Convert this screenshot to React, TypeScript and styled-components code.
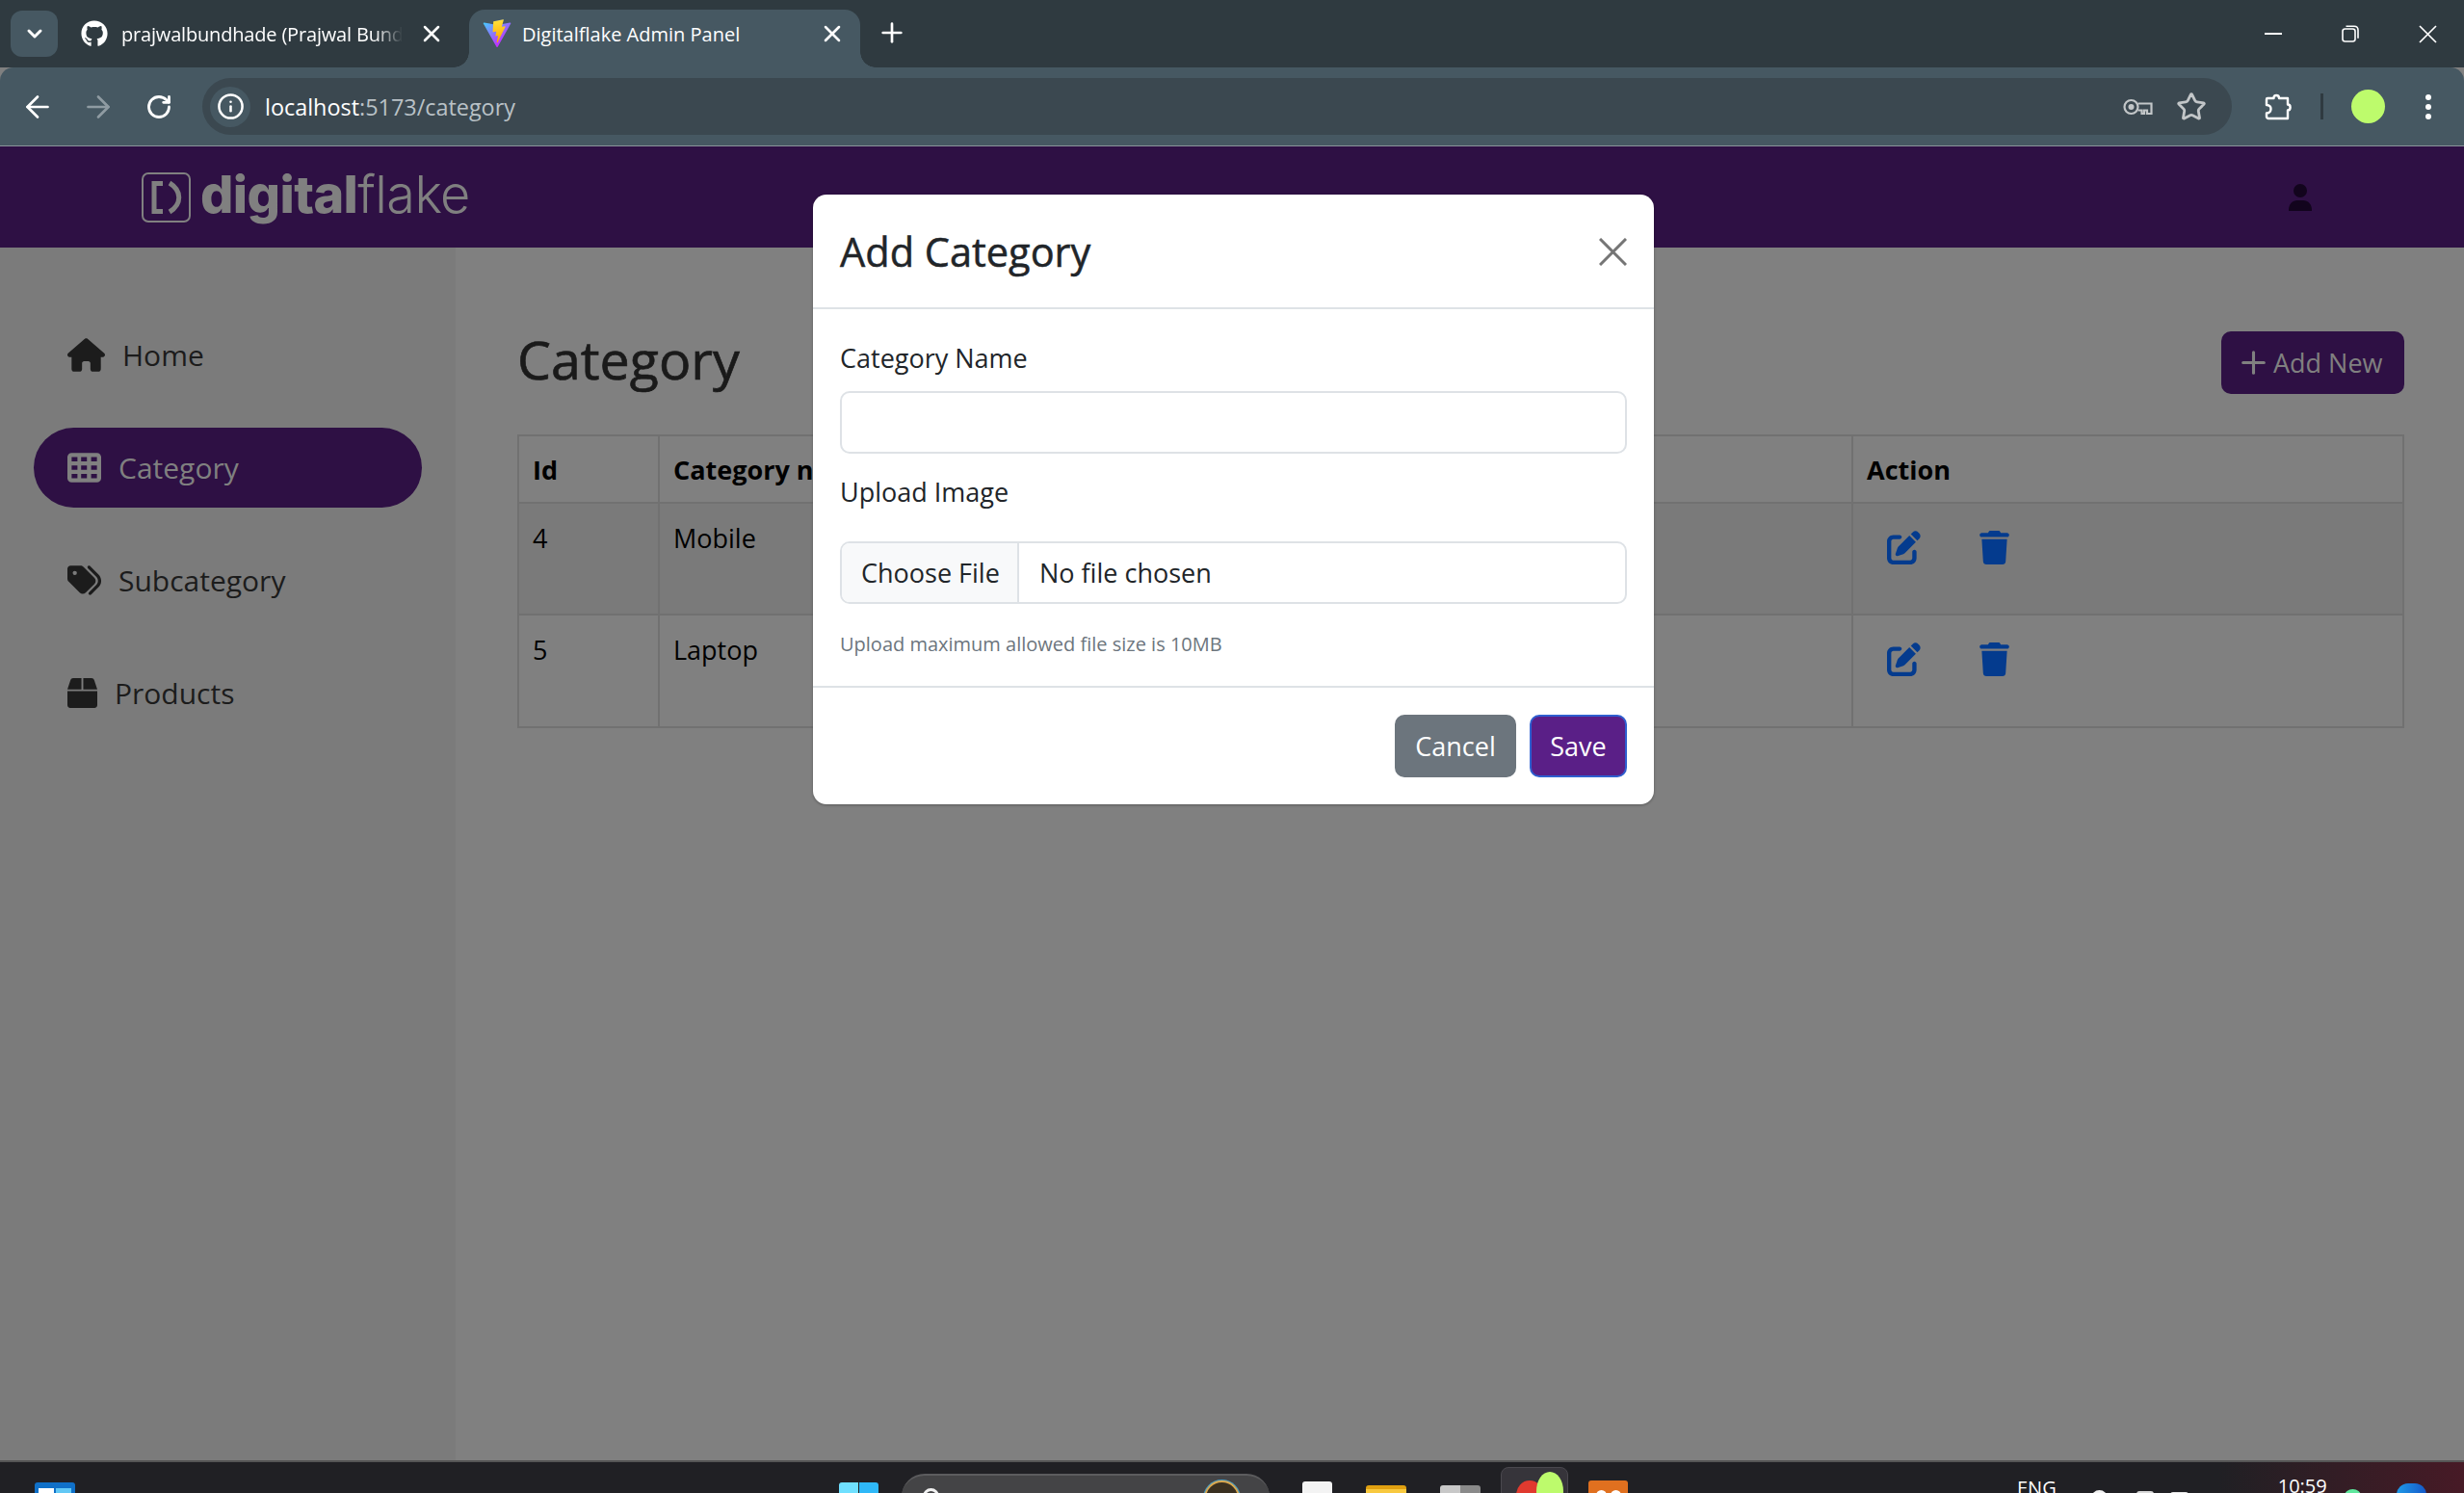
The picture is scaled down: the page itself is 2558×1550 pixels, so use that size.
import React from 'react';
import styled, { createGlobalStyle } from 'styled-components';
import { FaBox } from 'react-icons/fa';
import { FaHouse, FaTableCells, FaTags, FaPenToSquare, FaTrash, FaGithub } from 'react-icons/fa6';
import { ArrowLeft, ArrowRight, RotateCw, Info, ChevronDown, Plus, X, Star } from 'lucide-react';

const FONT = `"Open Sans", "Noto Sans", "Liberation Sans", sans-serif`;
const PURPLE = '#2e1044';
const Global = createGlobalStyle`
  html, body { margin: 0; padding: 0; width: 2558px; height: 1550px; overflow: hidden; background: #808080; }
  * { box-sizing: border-box; }
  body { font-family: ${FONT}; }
`;
const Screen = styled.div`
  width: 2558px; height: 1550px; display: flex; flex-direction: column; position: relative; overflow: hidden;
`;
const TabStrip = styled.div`
  height: 70px; background: #2f3a40; display: flex; align-items: flex-start; padding: 10px 0 0 11px; flex: none;
`;
const TabSearch = styled.div`
  width: 49px; height: 48px; margin-top: 1px; border-radius: 12px; background: #465862; color: #fff; display: flex; align-items: center; justify-content: center; flex: none;
`;
const Tab = styled.div<{ $active?: boolean }>`
  width: ${p => (p.$active ? '406px' : '427px')}; height: 60px; display: flex; align-items: center; flex: none; position: relative;
  padding: 0 ${p => (p.$active ? '15px' : '25px')} 10px ${p => (p.$active ? '14px' : '24px')};
  gap: ${p => (p.$active ? '11px' : '14px')}; color: #fff; font-size: 20px; white-space: nowrap;
  border-radius: 16px 16px 0 0; background: ${p => (p.$active ? '#465862' : 'transparent')};
  ${p => p.$active && `
    &::before, &::after { content: ''; position: absolute; bottom: 0; width: 16px; height: 16px; }
    &::before { left: -16px; background: radial-gradient(circle at 0 0, #2f3a40 15.5px, #465862 16px); }
    &::after { right: -16px; background: radial-gradient(circle at 100% 0, #2f3a40 15.5px, #465862 16px); }
  `}
`;
const TabTitle = styled.span<{ $fade?: boolean }>`
  flex: 1; min-width: 0; overflow: hidden; white-space: nowrap; margin-right: 2px;
  ${p => p.$fade && `letter-spacing: -0.18px; -webkit-mask-image: linear-gradient(90deg, #000 90%, transparent 100%); mask-image: linear-gradient(90deg, #000 90%, transparent 100%);`}
`;
const NewTab = styled.div`
  width: 42px; height: 42px; margin: 3px 0 0 12px; color: #fff; display: flex; align-items: center; justify-content: center; flex: none;
`;
const WinControls = styled.div`
  margin-left: auto; margin-right: -2px; display: flex; height: 50px; align-items: center; color: #fff;
`;
const WinButton = styled.div`
  width: 80px; display: flex; justify-content: center; align-items: center;
`;
const Toolbar = styled.div`
  height: 82px; background: #465862; border-bottom: 1px solid #8a949b; border-radius: 14px 14px 0 0; display: flex; align-items: center; padding: 0 34px 0 7px; color: #fff; flex: none;
`;
const NavIcon = styled.div<{ $dim?: boolean }>`
  width: 63px; display: flex; justify-content: center; color: ${p => (p.$dim ? '#8f9ba2' : '#fff')}; flex: none;
`;
const Omnibox = styled.div`
  flex: 1; height: 59px; background: #3b4850; border-radius: 30px; display: flex; align-items: center; padding: 0 26px 0 8px; margin: 0 34px 0 14px; font-size: 23.4px;
`;
const SiteInfo = styled.div`
  width: 42px; height: 42px; border-radius: 50%; background: #465862; display: flex; align-items: center; justify-content: center; margin-right: 15px; flex: none;
`;
const Host = styled.span` color: #fff; `;
const UrlRest = styled.span` color: #b9c1c6; `;
const OmniIcons = styled.div`
  margin-left: auto; display: flex; align-items: center; gap: 24px; color: #c2c6c8;
`;
const Divider = styled.div`
  width: 3px; height: 27px; background: #2f3a40; margin: 0 29px 0 29px; flex: none;
`;
const Avatar = styled.div`
  width: 35px; height: 35px; border-radius: 50%; background: #bdfb6c; margin-right: 42px; flex: none;
`;
const AppHeader = styled.header`
  height: 105px; background: ${PURPLE}; flex: none; display: flex; align-items: center; padding: 0 158px 0 147px; justify-content: space-between;
`;
const Logo = styled.div`
  display: flex; align-items: center; gap: 10px; color: #808080; font-family: "Inter", ${FONT}; font-size: 54px; line-height: 1;
`;
const LogoWord = styled.span` letter-spacing: -0.6px; margin-top: -6px; `;
const LogoBold = styled.span` font-weight: 800; `;
const LogoThin = styled.span` font-weight: 300; `;
const Body = styled.div`
  flex: 1; display: flex; min-height: 0;
`;
const Sidebar = styled.nav`
  width: 473px; background: #7b7b7b; padding: 70px 35px 0 35px; display: flex; flex-direction: column; gap: 34px; flex: none;
`;
const NavItem = styled.div<{ $active?: boolean }>`
  height: 83px; border-radius: 42px; display: flex; align-items: center; padding-left: 35px; gap: 18px; font-size: 30px;
  background: ${p => (p.$active ? PURPLE : 'transparent')}; color: ${p => (p.$active ? '#808080' : '#1c1c1c')};
`;
const Main = styled.main`
  flex: 1; padding: 87px 62px 0 64px; background: #808080; min-width: 0;
`;
const TitleRow = styled.div`
  display: flex; justify-content: space-between; align-items: flex-start; height: 107px;
`;
const PageTitle = styled.h1`
  margin: -1px 0 0; font-size: 55.5px; font-weight: 400; -webkit-text-stroke: 0.7px #1a1a1a; color: #1a1a1a; line-height: 59px;
`;
const AddButton = styled.button`
  width: 190px; height: 65px; background: ${PURPLE}; color: #808080; border: 0; border-radius: 10px; font: 400 27px ${FONT}; display: flex; align-items: center; justify-content: flex-start; gap: 2px; padding: 0 0 0 15px;
`;
const Table = styled.table`
  width: 100%; border-collapse: collapse; font-size: 27px; line-height: 42px; color: #000; table-layout: fixed;
`;
const Th = styled.th<{ $w?: number }>`
  border: 2px solid #717171; text-align: left; padding: 14px 14px 12px; height: 70px; font-weight: 700; width: ${p => (p.$w ? `${p.$w}px` : 'auto')};
`;
const Td = styled.td<{ $striped?: boolean }>`
  border: 2px solid #717171; padding: 15px 14px 13px; height: ${p => (p.$striped ? 116 : 117)}px; vertical-align: top; background: ${p => (p.$striped ? '#7a7a7a' : 'transparent')};
`;
const Actions = styled.div`
  display: flex; gap: 59px; padding: 13px 0 0 21px; color: #043b8e;
`;
const Modal = styled.div`
  position: absolute; left: 844px; top: 202px; width: 873px; height: 633px; background: #fff; border-radius: 14px; display: flex; flex-direction: column; color: #212529; box-shadow: 0 1px 3px rgba(0,0,0,.3);
`;
const ModalHead = styled.div`
  height: 119px; border-bottom: 2px solid #dee2e6; display: flex; align-items: center; justify-content: space-between; padding: 2px 28px 0 28px; flex: none;
`;
const ModalTitle = styled.h5`
  margin: 0; font-size: 41.5px; font-weight: 400; -webkit-text-stroke: 0.5px #212529; line-height: 1.2;
`;
const Close = styled.div`
  color: #757575; display: flex;
`;
const ModalBody = styled.div`
  flex: 1; padding: 30px 28px 0; border-bottom: 2px solid #dee2e6; display: flex; flex-direction: column;
`;
const Label = styled.label`
  font-size: 27px; line-height: 42px; display: block; flex: none;
`;
const TextInput = styled.div`
  height: 65px; border: 2px solid #dee2e6; border-radius: 10px; margin: 13px 0 19px; background: #fff; flex: none;
`;
const FileInput = styled.div`
  height: 65px; border: 2px solid #dee2e6; border-radius: 10px; margin-top: 30px; display: flex; align-items: center; overflow: hidden; font-size: 27px; flex: none;
`;
const FileBtn = styled.div`
  height: 100%; padding: 0 20px; width: 184px; white-space: nowrap; background: #f8f9fa; border-right: 2px solid #dee2e6; display: flex; align-items: center; margin-right: 21px;
`;
const Hint = styled.div`
  font-size: 20px; line-height: 28px; color: #6c757d; margin-top: 28px;
`;
const ModalFoot = styled.div`
  height: 121px; display: flex; justify-content: flex-end; align-items: center; gap: 14px; padding: 0 28px; flex: none;
`;
const Btn = styled.button<{ $save?: boolean }>`
  height: 65px; border-radius: 10px; color: #fff; font: 400 27px ${FONT}; padding: 0; width: ${p => (p.$save ? 101 : 126)}px;
  background: ${p => (p.$save ? '#5a1f87' : '#6c757d')}; border: 2px solid ${p => (p.$save ? '#2f5fd0' : '#6c757d')};
`;
const Taskbar = styled.div`
  height: 34px; flex: none; border-top: 2px solid #555; overflow: hidden; display: flex; align-items: flex-start;
  background: linear-gradient(90deg, #202024 0 90%, #471a26 100%);
`;
const TaskIcon = styled.div<{ $ml: number; $mt: number; $w: number; $h: number; $bg: string; $r?: string }>`
  flex: none; margin-left: ${p => p.$ml}px; margin-top: ${p => p.$mt}px; width: ${p => p.$w}px; height: ${p => p.$h}px;
  background: ${p => p.$bg}; border-radius: ${p => p.$r ?? '3px 3px 0 0'}; display: flex; position: relative;
`;
const WidgetPane = styled.div<{ $c: string; $ml: number; $w: number }>`
  width: ${p => p.$w}px; height: 14px; margin: 6px 0 0 ${p => p.$ml}px; background: ${p => p.$c};
`;
const SearchPill = styled.div`
  flex: none; margin: 12px 0 0 24px; width: 382px; height: 40px; border-radius: 24px 24px 0 0; background: #444446; border-top: 2px solid #5c5c5e; display: flex; align-items: flex-start; padding: 13px 31px 0 22px; justify-content: space-between;
`;
const SearchRing = styled.div`
  width: 17px; height: 17px; border: 3px solid #f2f2f2; border-radius: 50%;
`;
const SearchBadge = styled.div`
  width: 37px; height: 37px; margin-top: -8px; border-radius: 50%; border: 2px solid #d9a74e; background: #3a3020; box-shadow: 0 0 0 1px #4b9cc0;
`;
const ActiveApp = styled.div`
  flex: none; margin: 5px 0 0 21px; width: 70px; height: 40px; border-radius: 8px 8px 0 0; background: #36343a; border: 1px solid #4a484e; position: relative;
`;
const AppRed = styled.div`
  position: absolute; left: 15px; top: 13px; width: 28px; height: 30px; border-radius: 50%; background: #e03a2f;
`;
const AppLime = styled.div`
  position: absolute; left: 36px; top: 4px; width: 28px; height: 40px; border-radius: 50%; background: #bdfb6c;
`;
const OrangeDot = styled.div<{ $ml: number }>`
  width: 11px; height: 11px; margin: 10px 0 0 ${p => p.$ml}px; border-radius: 50%; background: #fff;
`;
const TrayText = styled.span<{ $ml: number; $mt: number }>`
  flex: none; margin-left: ${p => p.$ml}px; margin-top: ${p => p.$mt}px; color: #fff; font-size: 20px; line-height: 24px;
`;

const ViteIcon = () => (
  <svg width="30" height="30" viewBox="0 0 410 404">
    <defs>
      <linearGradient id="va" x1="6" y1="33" x2="235" y2="344" gradientUnits="userSpaceOnUse"><stop stopColor="#41D1FF" /><stop offset="1" stopColor="#BD34FE" /></linearGradient>
      <linearGradient id="vb" x1="194" y1="8" x2="236" y2="292" gradientUnits="userSpaceOnUse"><stop stopColor="#FFEA83" /><stop offset=".08" stopColor="#FFDD35" /><stop offset="1" stopColor="#FFA800" /></linearGradient>
    </defs>
    <path d="M399.6 59.5 215.9 388.2c-3.8 6.8-13.5 6.8-17.4.1L11.2 59.5C7 52.1 13.3 43.1 21.7 44.6L205.6 77.5c1.2.2 2.4.2 3.5 0L389.1 44.7c8.4-1.5 14.8 7.4 10.5 14.8Z" fill="url(#va)" />
    <path d="M292.9 1.6 156.9 28.2c-2.2.4-3.8 2.3-4 4.6l-8.4 141.3c-.2 3.3 2.9 5.9 6.1 5.2l37.9-8.7c3.5-.8 6.7 2.3 6 5.9l-11.3 55.1c-.8 3.7 2.7 6.9 6.3 5.8l23.4-7.1c3.6-1.1 7.1 2.1 6.3 5.8l-17.9 86.6c-1.1 5.4 6.1 8.4 9.1 3.7l2-3.1 110.9-221.3c1.9-3.7-1.3-7.9-5.4-7.1l-39 7.5c-3.7.7-6.8-2.7-5.8-6.3L299 7.5c1-3.6-2.2-7-5.9-6.3Z" fill="url(#vb)" />
  </svg>
);
const LogoMark = () => (
  <svg width="51" height="52" viewBox="0 0 51 52" fill="none" stroke="#808080">
    <rect x="1" y="1" width="49" height="50" rx="6" strokeWidth="2" />
    <path d="M22 11.5h-9v29h9" strokeWidth="5" />
    <path d="M29 11c13 8 13 22 0 30" strokeWidth="5" />
  </svg>
);
const UserIcon = () => (
  <svg width="24" height="28" viewBox="0 0 24 28" fill="#12041d">
    <circle cx="12" cy="7" r="7" />
    <path d="M0 28v-1c0-6 4-10 9-10h6c5 0 9 4 9 10v1z" />
  </svg>
);
const KeyIcon = () => (
  <svg width="31" height="18" viewBox="0 0 31 18" fill="none" stroke="currentColor" strokeWidth="2.2">
    <circle cx="8.5" cy="9" r="7" />
    <circle cx="8.5" cy="9" r="3" fill="currentColor" stroke="none" />
    <path d="M15.5 5.5H29.5V16H25V12.5H22V16H19.5V12.5H15.5" />
  </svg>
);
const PuzzleIcon = () => (
  <svg width="29" height="28" viewBox="0 0 29 28" fill="none" stroke="#fff" strokeWidth="2.4" strokeLinejoin="round">
    <path d="M3 5h6.5c0-4 5.5-4 5.500 0H24v6.500c3.500 0 3.500 6 0 6V26H4c-1 0-2-1-2-2v-3.500c3.500 0 4.500-2.500 4.500-4.500S5.500 12 2 12V6c0-.5.5-1 1-1z" />
  </svg>
);
const MenuDots = () => (
  <svg width="6" height="26" viewBox="0 0 6 26" fill="#fff">
    <circle cx="3" cy="3" r="3" /><circle cx="3" cy="13" r="3" /><circle cx="3" cy="23" r="3" />
  </svg>
);
const MinimizeIcon = () => (
  <svg width="18" height="18" viewBox="0 0 18 18" stroke="#fff" strokeWidth="2"><path d="M0 9h18" /></svg>
);
const RestoreIcon = () => (
  <svg width="18" height="18" viewBox="0 0 18 18" fill="none" stroke="#fff" strokeWidth="1.6">
    <rect x="1" y="4" width="13" height="13" rx="2.5" />
    <path d="M4.500 1.200h8.500c2.500 0 4 1.500 4 4v8.500" />
  </svg>
);
const CrossIcon = ({ size, weight }: { size: number; weight: number }) => (
  <svg width={size} height={size} viewBox={`0 0 ${size} ${size}`} stroke="currentColor" strokeWidth={weight}>
    <path d={`M1 1L${size - 1} ${size - 1}M${size - 1} 1L1 ${size - 1}`} />
  </svg>
);

export default function App() {
  return (
    <Screen>
      <Global />
      <TabStrip>
        <TabSearch><ChevronDown size={24} strokeWidth={3} /></TabSearch>
        <Tab>
          <FaGithub size={28} style={{ flex: 'none' }} />
          <TabTitle $fade>prajwalbundhade (Prajwal Bundhade)</TabTitle>
          <X size={28} strokeWidth={2.2} style={{ flex: 'none' }} />
        </Tab>
        <Tab $active>
          <ViteIcon />
          <TabTitle>Digitalflake Admin Panel</TabTitle>
          <X size={28} strokeWidth={2.2} style={{ flex: 'none' }} />
        </Tab>
        <NewTab><Plus size={32} strokeWidth={2} /></NewTab>
        <WinControls>
          <WinButton><MinimizeIcon /></WinButton>
          <WinButton><RestoreIcon /></WinButton>
          <WinButton><CrossIcon size={19} weight={1.7} /></WinButton>
        </WinControls>
      </TabStrip>
      <Toolbar>
        <NavIcon><ArrowLeft size={36} strokeWidth={1.8} /></NavIcon>
        <NavIcon $dim><ArrowRight size={36} strokeWidth={1.8} /></NavIcon>
        <NavIcon><RotateCw size={28} strokeWidth={2.4} /></NavIcon>
        <Omnibox>
          <SiteInfo><Info size={29} strokeWidth={2.1} /></SiteInfo>
          <Host>localhost</Host><UrlRest>:5173/category</UrlRest>
          <OmniIcons>
            <KeyIcon />
            <Star size={32} strokeWidth={2.1} />
          </OmniIcons>
        </Omnibox>
        <PuzzleIcon />
        <Divider />
        <Avatar />
        <MenuDots />
      </Toolbar>
      <AppHeader>
        <Logo>
          <LogoMark />
          <LogoWord><LogoBold>digital</LogoBold><LogoThin>flake</LogoThin></LogoWord>
        </Logo>
        <UserIcon />
      </AppHeader>
      <Body>
        <Sidebar>
          <NavItem><FaHouse size={39} />Home</NavItem>
          <NavItem $active><FaTableCells size={35} />Category</NavItem>
          <NavItem><FaTags size={35} />Subcategory</NavItem>
          <NavItem><FaBox size={31} />Products</NavItem>
        </Sidebar>
        <Main>
          <TitleRow>
            <PageTitle>Category</PageTitle>
            <AddButton><Plus size={37} strokeWidth={2} />Add New</AddButton>
          </TitleRow>
          <Table>
            <thead>
              <tr>
                <Th $w={146}>Id</Th>
                <Th $w={1239}>Category name</Th>
                <Th>Action</Th>
              </tr>
            </thead>
            <tbody>
              <tr>
                <Td $striped>4</Td>
                <Td $striped>Mobile</Td>
                <Td $striped><Actions><FaPenToSquare size={35} /><FaTrash size={35} /></Actions></Td>
              </tr>
              <tr>
                <Td>5</Td>
                <Td>Laptop</Td>
                <Td><Actions><FaPenToSquare size={35} /><FaTrash size={35} /></Actions></Td>
              </tr>
            </tbody>
          </Table>
        </Main>
      </Body>
      <Taskbar>
        <TaskIcon $ml={36} $mt={21} $w={42} $h={14} $bg="#1070c8">
          <WidgetPane $c="#fff" $ml={4} $w={16} />
          <WidgetPane $c="#62c8f5" $ml={2} $w={16} />
        </TaskIcon>
        <TaskIcon $ml={793} $mt={21} $w={41} $h={14} $bg="linear-gradient(90deg, #6fe0ff 0 48%, #202024 48% 52%, #2fb8f8 52%)" />
        <SearchPill><SearchRing /><SearchBadge /></SearchPill>
        <TaskIcon $ml={34} $mt={20} $w={31} $h={14} $bg="#f3f3f3" />
        <TaskIcon $ml={35} $mt={24} $w={42} $h={14} $bg="linear-gradient(#e0a010 0 4px, #f8c93f 4px)" />
        <TaskIcon $ml={35} $mt={24} $w={42} $h={14} $bg="linear-gradient(90deg, #c8c8c8 50%, #8a8a8a 50%)" />
        <ActiveApp><AppRed /><AppLime /></ActiveApp>
        <TaskIcon $ml={21} $mt={19} $w={41} $h={16} $bg="#e0701f"><OrangeDot $ml={8} /><OrangeDot $ml={4} /></TaskIcon>
        <TrayText $ml={404} $mt={15}>ENG</TrayText>
        <TaskIcon $ml={36} $mt={29} $w={17} $h={17} $bg="transparent" $r="50%"><SearchRing /></TaskIcon>
        <TaskIcon $ml={30} $mt={30} $w={18} $h={6} $bg="#d8d8d8" />
        <TaskIcon $ml={17} $mt={31} $w={19} $h={4} $bg="#e8e8e8" />
        <TrayText $ml={93} $mt={13}>10:59</TrayText>
        <TaskIcon $ml={18} $mt={28} $w={17} $h={14} $bg="#5fe89e" $r="50% 50% 0 0" />
        <TaskIcon $ml={37} $mt={22} $w={31} $h={14} $bg="linear-gradient(90deg, #1f9ae8, #1558c8)" $r="12px 12px 0 0" />
      </Taskbar>
      <Modal>
        <ModalHead>
          <ModalTitle>Add Category</ModalTitle>
          <Close><CrossIcon size={29} weight={3} /></Close>
        </ModalHead>
        <ModalBody>
          <Label>Category Name</Label>
          <TextInput />
          <Label>Upload Image</Label>
          <FileInput><FileBtn>Choose File</FileBtn>No file chosen</FileInput>
          <Hint>Upload maximum allowed file size is 10MB</Hint>
        </ModalBody>
        <ModalFoot>
          <Btn>Cancel</Btn>
          <Btn $save>Save</Btn>
        </ModalFoot>
      </Modal>
    </Screen>
  );
}
